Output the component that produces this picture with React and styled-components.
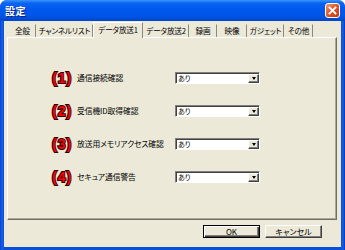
import React from 'react'
import styled, { createGlobalStyle } from 'styled-components'

const GlobalStyle = createGlobalStyle`
  html, body {
    margin: 0;
    padding: 0;
    background: #fff;
  }
  body {
    font-family: "Noto Sans CJK JP", "Noto Sans", sans-serif;
    font-feature-settings: "palt";
  }
`

const tabs = [
  { label: '全般', width: 27 },
  { label: 'チャンネルリスト', width: 57 },
  { label: 'データ放送1', width: 50, active: true },
  { label: 'データ放送2', width: 46 },
  { label: '録画', width: 28 },
  { label: '映像', width: 30 },
  { label: 'ガジェット', width: 37 },
  { label: 'その他', width: 29 },
]

const rows = [
  { no: '(1)', label: '通信接続確認' },
  { no: '(2)', label: '受信機ID取得確認' },
  { no: '(3)', label: '放送用メモリアクセス確認' },
  { no: '(4)', label: 'セキュア通信警告' },
]

const App = () => {
  return (
    <>
      <GlobalStyle />
      <Window>
        <TitleBar>
          <Title>設定</Title>
          <CloseButton>
            <svg width="13" height="13" viewBox="0 0 13 13">
              <path d="M3.5 3.5 L9.5 9.5 M9.5 3.5 L3.5 9.5" stroke="#fff" strokeWidth="1.8" strokeLinecap="square" />
            </svg>
          </CloseButton>
        </TitleBar>
        <Client>
          <TabRow>
            {tabs.map((t) => (
              <Tab key={t.label} $width={t.width} $active={t.active}>
                {t.label}
              </Tab>
            ))}
          </TabRow>
          <Panel>
            <SettingsGrid>
              {rows.map((r) => (
                <React.Fragment key={r.no}>
                  <Number>{r.no}</Number>
                  <Label>{r.label}</Label>
                  <Combo>
                    <ComboText>あり</ComboText>
                    <ComboButton>
                      <Arrow />
                    </ComboButton>
                  </Combo>
                </React.Fragment>
              ))}
            </SettingsGrid>
          </Panel>
          <Footer>
            <Button $default>OK</Button>
            <Button>キャンセル</Button>
          </Footer>
        </Client>
      </Window>
    </>
  )
}

const Window = styled.div`
  width: 345px;
  height: 250px;
  display: flex;
  flex-direction: column;
  background: linear-gradient(to right, #0841D0 0px, #1660E8 2px, #0A4FD8 4px, #0A4FD8 341px, #1660E8 343px, #0734B8 345px);
  border-radius: 7px 7px 0 0;
  overflow: hidden;
`

const TitleBar = styled.div`
  height: 21px;
  flex: none;
  display: flex;
  align-items: center;
  justify-content: space-between;
  padding: 0 5px 0 5px;
  background: linear-gradient(to bottom, #3D95FF 0px, #0A66F0 3px, #0058EE 9px, #0055E8 16px, #0046C8 21px);
`

const Title = styled.div`
  color: #fff;
  font-size: 10px;
  font-weight: bold;
  letter-spacing: 0.5px;
  text-shadow: 1px 1px #0A1E7A;
  line-height: 1;
`

const CloseButton = styled.div`
  width: 15px;
  height: 15px;
  box-sizing: border-box;
  border: 1px solid #fff;
  border-radius: 3px;
  background: linear-gradient(135deg, #F09A78 0%, #E2582A 45%, #C23A15 100%);
  display: flex;
  align-items: center;
  justify-content: center;
`

const Client = styled.div`
  flex: 1;
  margin: 0 4px 3px 4px;
  background: #ECE9D8;
  display: flex;
  flex-direction: column;
  padding-top: 1px;
`

const TabRow = styled.div`
  height: 16px;
  display: flex;
  align-items: flex-start;
  padding-left: 5px;
  margin-bottom: -1px;
  position: relative;
  z-index: 1;
`

const Tab = styled.div`
  width: ${(p) => p.$width}px;
  height: ${(p) => (p.$active ? 16 : 13)}px;
  margin-top: ${(p) => (p.$active ? 0 : 2)}px;
  box-sizing: border-box;
  background: #ECE9D8;
  border-right: 1px solid #8C8A7E;
  border-top: 1px solid ${(p) => (p.$active ? '#fff' : 'transparent')};
  border-left: 1px solid ${(p) => (p.$active ? '#fff' : 'transparent')};
  display: flex;
  align-items: center;
  justify-content: center;
  padding-bottom: ${(p) => (p.$active ? 2 : 0)}px;
  font-size: 7.6px;
  letter-spacing: -0.2px;
  color: #000;
  white-space: nowrap;
  line-height: 1;
`

const Panel = styled.div`
  height: 183px;
  box-sizing: border-box;
  margin: 0 4px 0 3px;
  border: 1px solid;
  border-color: #fff #716F64 #716F64 #fff;
  box-shadow: inset -1px -1px #ACA899;
`

const SettingsGrid = styled.div`
  display: grid;
  grid-template-columns: 25px 98px 85px;
  grid-auto-rows: 33px;
  align-items: center;
  padding: 23px 0 0 44px;
`

const Number = styled.div`
  font-family: "Liberation Sans", Arial, sans-serif;
  font-weight: bold;
  font-size: 14px;
  letter-spacing: 1px;
  color: #FF0000;
  -webkit-text-stroke: 2px #2A0000;
  paint-order: stroke fill;
  line-height: 1;
`

const Label = styled.div`
  font-size: 7.8px;
  letter-spacing: -0.1px;
  color: #000;
  white-space: nowrap;
  line-height: 1;
`

const Combo = styled.div`
  width: 85px;
  height: 12px;
  box-sizing: border-box;
  border: 1px solid;
  border-color: #808080 #fff #fff #808080;
  box-shadow: inset 1px 1px #404040;
  background: #fff;
  display: flex;
  align-items: center;
  justify-content: space-between;
  padding: 1px 0 0 2px;
`

const ComboText = styled.span`
  font-size: 7px;
  color: #000;
  line-height: 1;
`

const ComboButton = styled.div`
  width: 11px;
  height: 9px;
  box-sizing: border-box;
  background: #ECE9D8;
  border: 1px solid;
  border-color: #fff #404040 #404040 #fff;
  box-shadow: inset -1px -1px #808080;
  display: flex;
  align-items: center;
  justify-content: center;
`

const Arrow = styled.div`
  width: 0;
  height: 0;
  border-left: 2.5px solid transparent;
  border-right: 2.5px solid transparent;
  border-top: 3px solid #000;
`

const Footer = styled.div`
  display: flex;
  justify-content: flex-end;
  gap: 5px;
  padding: 5px 19px 0 0;
`

const Button = styled.div`
  width: 57px;
  height: 13px;
  box-sizing: border-box;
  background: #ECE9D8;
  border: 1px solid;
  border-color: ${(p) => (p.$default ? '#000' : '#fff #404040 #404040 #fff')};
  box-shadow: ${(p) =>
    p.$default
      ? 'inset 1px 1px #fff, inset -1px -1px #404040, inset -2px -2px #808080'
      : 'inset -1px -1px #808080'};
  display: flex;
  align-items: center;
  justify-content: center;
  font-size: 8px;
  color: #000;
  line-height: 1;
`

export default App
